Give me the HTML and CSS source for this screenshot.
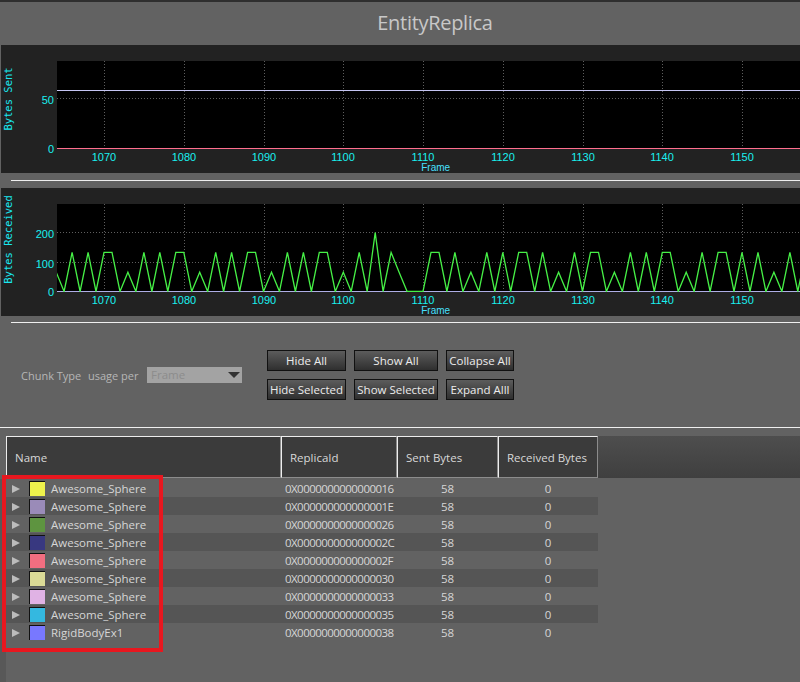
FILE: index.html
```html
<!DOCTYPE html>
<html>
<head>
<meta charset="utf-8">
<title>EntityReplica</title>
<link rel="stylesheet" href="styles.css">
</head>
<body>
<div class="app">
  <header class="titlebar"><h1 class="title">EntityReplica</h1></header>

  <section class="chart">
    <svg width="799" height="128" viewBox="0 0 799 128">
      <rect x="56" y="16" width="743" height="88" fill="#000"/>
      <g class="grid">
        <line x1="103.5" y1="16" x2="103.5" y2="104"/>
        <line x1="183.5" y1="16" x2="183.5" y2="104"/>
        <line x1="263.5" y1="16" x2="263.5" y2="104"/>
        <line x1="342.5" y1="16" x2="342.5" y2="104"/>
        <line x1="422.5" y1="16" x2="422.5" y2="104"/>
        <line x1="502.5" y1="16" x2="502.5" y2="104"/>
        <line x1="582.5" y1="16" x2="582.5" y2="104"/>
        <line x1="661.5" y1="16" x2="661.5" y2="104"/>
        <line x1="741.5" y1="16" x2="741.5" y2="104"/>
        <line x1="56" y1="53.5" x2="799" y2="53.5"/>
      </g>
      <line x1="56" y1="45.5" x2="799" y2="45.5" stroke="#c4c4f2" stroke-width="1"/>
      <line x1="56" y1="103.5" x2="799" y2="103.5" stroke="#ff6e8e" stroke-width="1"/>
      <g class="ytick">
        <text x="53" y="58.7">50</text>
        <text x="53" y="108.4">0</text>
      </g>
      <g class="xtick">
        <text x="103" y="116">1070</text>
        <text x="183" y="116">1080</text>
        <text x="263" y="116">1090</text>
        <text x="342" y="116">1100</text>
        <text x="422" y="116">1110</text>
        <text x="502" y="116">1120</text>
        <text x="582" y="116">1130</text>
        <text x="661" y="116">1140</text>
        <text x="741" y="116">1150</text>
      </g>
      <text class="axis-x" x="434.7" y="126">Frame</text>
      <text class="axis-y" transform="translate(11,54) rotate(-90)">Bytes Sent</text>
    </svg>
  </section>

  <div class="rule"></div>

  <section class="chart">
    <svg width="799" height="128" viewBox="0 0 799 128">
      <defs>
        <clipPath id="plot2"><rect x="56" y="16" width="743" height="88"/></clipPath>
      </defs>
      <rect x="56" y="16" width="743" height="88" fill="#000"/>
      <g class="grid">
        <line x1="103.5" y1="16" x2="103.5" y2="104"/>
        <line x1="183.5" y1="16" x2="183.5" y2="104"/>
        <line x1="263.5" y1="16" x2="263.5" y2="104"/>
        <line x1="342.5" y1="16" x2="342.5" y2="104"/>
        <line x1="422.5" y1="16" x2="422.5" y2="104"/>
        <line x1="502.5" y1="16" x2="502.5" y2="104"/>
        <line x1="582.5" y1="16" x2="582.5" y2="104"/>
        <line x1="661.5" y1="16" x2="661.5" y2="104"/>
        <line x1="741.5" y1="16" x2="741.5" y2="104"/>
        <line x1="56" y1="44.5" x2="799" y2="44.5"/>
        <line x1="56" y1="74.5" x2="799" y2="74.5"/>
      </g>
      <line x1="56" y1="103.5" x2="799" y2="103.5" stroke="#aeaee6" stroke-width="1"/>
      <polyline clip-path="url(#plot2)" fill="none" stroke="#46f046" stroke-width="1.3" stroke-linejoin="miter"
        points="55.2,84.2 63.1,103.5 71.1,64.4 79.1,103.5 87.1,64.4 95,103.5 103,64.4 111,64.4 119,103.5 126.9,84.2 134.9,103.5 142.9,64.4 150.9,103.5 158.8,64.4 166.8,103.5 174.8,64.4 182.8,64.4 190.7,103.5 198.7,84.2 206.7,103.5 214.7,64.4 222.6,103.5 230.6,64.4 238.6,103.5 246.6,64.4 254.5,64.4 262.5,103.5 270.5,84.2 278.5,103.5 286.4,64.4 294.4,103.5 302.4,64.4 310.4,103.5 318.3,64.4 326.3,64.4 334.3,103.5 342.3,84.2 350.2,103.5 358.2,64.4 366.2,103.5 374.2,44.7 382.1,103.5 390.1,64.4 398.1,84.2 406.1,103.5 414,103.5 422,103.5 430,64.4 438,64.4 445.9,103.5 453.9,64.4 461.9,103.5 469.9,84.2 477.8,103.5 485.8,64.4 493.8,103.5 501.8,64.4 509.7,103.5 517.7,64.4 525.7,64.4 533.7,103.5 541.6,64.4 549.6,103.5 557.6,84.2 565.6,103.5 573.5,64.4 581.5,103.5 589.5,64.4 597.5,64.4 605.4,103.5 613.4,84.2 621.4,103.5 629.4,64.4 637.3,103.5 645.3,64.4 653.3,103.5 661.3,64.4 669.2,64.4 677.2,103.5 685.2,84.2 693.2,103.5 701.1,64.4 709.1,103.5 717.1,64.4 725.1,64.4 733,103.5 741,64.4 749,103.5 757,64.4 764.9,103.5 772.9,84.2 780.9,103.5 788.9,64.4 796.8,103.5 804.8,64.4"/>
      <g class="ytick">
        <text x="53" y="50">200</text>
        <text x="53" y="79.7">100</text>
        <text x="53" y="108.4">0</text>
      </g>
      <g class="xtick">
        <text x="103" y="116">1070</text>
        <text x="183" y="116">1080</text>
        <text x="263" y="116">1090</text>
        <text x="342" y="116">1100</text>
        <text x="422" y="116">1110</text>
        <text x="502" y="116">1120</text>
        <text x="582" y="116">1130</text>
        <text x="661" y="116">1140</text>
        <text x="741" y="116">1150</text>
      </g>
      <text class="axis-x" x="434.7" y="126">Frame</text>
      <text class="axis-y" transform="translate(11,51.5) rotate(-90)">Bytes Received</text>
    </svg>
  </section>

  <div class="rule rule-2"></div>

  <section class="controls">
    <div class="chunk">
      <span class="lbl lbl-type">Chunk Type</span>
      <span class="lbl lbl-usage">usage per</span>
      <div class="select"><span class="select-text">Frame</span><i class="caret"></i></div>
    </div>
    <div class="buttons">
      <button class="btn">Hide All</button>
      <button class="btn">Show All</button>
      <button class="btn">Collapse All</button>
      <button class="btn">Hide Selected</button>
      <button class="btn">Show Selected</button>
      <button class="btn">Expand Alll</button>
    </div>
  </section>

  <div class="rule rule-full"></div>

  <section class="table">
    <div class="thead">
      <div class="th th-name">Name</div>
      <div class="th th-id">ReplicaId</div>
      <div class="th th-sent">Sent Bytes</div>
      <div class="th th-recv">Received Bytes</div>
      <div class="th-fill"></div>
    </div>
    <div class="tbody">
      <div class="row">
        <div class="td name"><i class="arrow"></i><i class="swatch sw-1"></i><span>Awesome_Sphere</span></div>
        <div class="td id">0X0000000000000016</div><div class="td num">58</div><div class="td num">0</div>
      </div>
      <div class="row alt">
        <div class="td name"><i class="arrow"></i><i class="swatch sw-2"></i><span>Awesome_Sphere</span></div>
        <div class="td id">0X000000000000001E</div><div class="td num">58</div><div class="td num">0</div>
      </div>
      <div class="row">
        <div class="td name"><i class="arrow"></i><i class="swatch sw-3"></i><span>Awesome_Sphere</span></div>
        <div class="td id">0X0000000000000026</div><div class="td num">58</div><div class="td num">0</div>
      </div>
      <div class="row alt">
        <div class="td name"><i class="arrow"></i><i class="swatch sw-4"></i><span>Awesome_Sphere</span></div>
        <div class="td id">0X000000000000002C</div><div class="td num">58</div><div class="td num">0</div>
      </div>
      <div class="row">
        <div class="td name"><i class="arrow"></i><i class="swatch sw-5"></i><span>Awesome_Sphere</span></div>
        <div class="td id">0X000000000000002F</div><div class="td num">58</div><div class="td num">0</div>
      </div>
      <div class="row alt">
        <div class="td name"><i class="arrow"></i><i class="swatch sw-6"></i><span>Awesome_Sphere</span></div>
        <div class="td id">0X0000000000000030</div><div class="td num">58</div><div class="td num">0</div>
      </div>
      <div class="row">
        <div class="td name"><i class="arrow"></i><i class="swatch sw-7"></i><span>Awesome_Sphere</span></div>
        <div class="td id">0X0000000000000033</div><div class="td num">58</div><div class="td num">0</div>
      </div>
      <div class="row alt">
        <div class="td name"><i class="arrow"></i><i class="swatch sw-8"></i><span>Awesome_Sphere</span></div>
        <div class="td id">0X0000000000000035</div><div class="td num">58</div><div class="td num">0</div>
      </div>
      <div class="row">
        <div class="td name"><i class="arrow"></i><i class="swatch sw-9"></i><span>RigidBodyEx1</span></div>
        <div class="td id">0X0000000000000038</div><div class="td num">58</div><div class="td num">0</div>
      </div>
    </div>
    <div class="highlight"></div>
  </section>
</div>
</body>
</html>
```

FILE: styles.css
```css
html, body {
  margin: 0;
  padding: 0;
  background: #626262;
}

.app {
  position: relative;
  width: 800px;
  height: 682px;
  overflow: hidden;
  background: #626262;
  font-family: "Open Sans", "Noto Sans", sans-serif;
}

/* title */
.titlebar {
  height: 45px;
  box-sizing: border-box;
  border-top: 2px solid #2e2e2e;
  display: flex;
  align-items: center;
  justify-content: center;
  padding: 0 0 2px 70px;
}

.title {
  margin: 0;
  font-size: 20px;
  font-weight: 400;
  letter-spacing: -0.3px;
  color: #c8c8c8;
}

/* charts */
.chart {
  height: 128px;
  margin-left: 1px;
  background: #222222;
}

.chart svg {
  display: block;
}

.grid line {
  stroke: #5e5e5e;
  stroke-width: 1;
  stroke-dasharray: 1 2;
}

.ytick text,
.xtick text {
  font-family: "Liberation Sans", Arial, sans-serif;
  font-size: 11px;
  fill: #19f0f0;
}

.ytick text {
  text-anchor: end;
}

.xtick text {
  text-anchor: middle;
}

.axis-x {
  font-family: "Liberation Sans", Arial, sans-serif;
  font-size: 10px;
  fill: #48e0ff;
  text-anchor: middle;
}

.axis-y {
  font-family: "DejaVu Sans Mono", monospace;
  font-size: 10.5px;
  fill: #19e8f0;
  text-anchor: middle;
}

/* separators */
.rule {
  height: 1px;
  background: #efefef;
  margin: 7px 0 7px 11px;
}

.rule-2 {
  margin: 6px 0 0 11px;
}

.rule-full {
  margin: 0;
}

/* controls */
.controls {
  height: 104px;
  box-sizing: border-box;
  padding: 27px 0 0 21px;
  display: flex;
  align-items: flex-start;
}

.chunk {
  height: 50px;
  padding-top: 2px;
  box-sizing: border-box;
  display: flex;
  align-items: center;
}

.lbl {
  font-size: 11px;
  color: #b6b6b6;
  line-height: 16px;
  white-space: nowrap;
}

.lbl-type {
  width: 67px;
}

.lbl-usage {
  width: 59px;
}

.select {
  width: 95px;
  height: 16px;
  margin-top: -2px;
  background: #a3a3a3;
  display: flex;
  align-items: center;
  justify-content: space-between;
  box-sizing: border-box;
  padding: 0 2px 0 4px;
}

.select-text {
  font-size: 11.5px;
  color: #8c8c8c;
  line-height: 16px;
}

.caret {
  width: 0;
  height: 0;
  border-left: 6px solid transparent;
  border-right: 6px solid transparent;
  border-top: 6px solid #333;
}

.buttons {
  margin-left: 25px;
  display: grid;
  grid-template-columns: 79px 84px 68px;
  grid-template-rows: 21px 21px;
  column-gap: 8px;
  row-gap: 8px;
}

.btn {
  margin: 0;
  padding: 0;
  border: 1px solid #111;
  border-radius: 0;
  background: linear-gradient(#5c5c5c, #2f2f2f);
  color: #ececec;
  font-family: "Open Sans", "Noto Sans", sans-serif;
  font-size: 11.5px;
  line-height: 19px;
  text-align: center;
}

/* table */
.table {
  padding-top: 8px;
  height: 254px;
  box-sizing: border-box;
}

.thead {
  display: flex;
  height: 42px;
  padding-left: 6px;
}

.th {
  box-sizing: border-box;
  height: 42px;
  background: #3b3b3b;
  border: 1px solid;
  border-color: #ededed #8c8c8c #8c8c8c #ededed;
  color: #d8d8d8;
  font-size: 11.5px;
  line-height: 42px;
  padding-left: 8px;
}

.th-name { width: 275px; }
.th-id { width: 116px; }
.th-sent { width: 101px; }
.th-recv { width: 100px; }

.th-fill {
  flex: 1;
  background: linear-gradient(#4e4e4e, #3f3f3f);
}

.tbody {
  margin-top: 1px;
  border-left: 6px solid #585858;
  height: 240px;
}

.row {
  display: grid;
  grid-template-columns: 275px 116px 101px 100px;
  height: 18px;
  width: 592px;
}

.row.alt {
  background: #555555;
}

.td {
  font-size: 11.5px;
  line-height: 19px;
  color: #d6d6d6;
  white-space: nowrap;
}

.name {
  display: flex;
  align-items: center;
}

.arrow {
  width: 0;
  height: 0;
  margin-left: 6px;
  border-left: 8px solid #bcbcbc;
  border-top: 4.5px solid transparent;
  border-bottom: 4.5px solid transparent;
}

.swatch {
  width: 16px;
  height: 15px;
  box-sizing: border-box;
  margin-left: 9px;
  margin-right: 6px;
  border-left: 1px solid #111;
  border-top: 1px solid #111;
}

.sw-1 { background: #eef24c; }
.sw-2 { background: #9a8bb8; }
.sw-3 { background: #5e9440; }
.sw-4 { background: #383880; }
.sw-5 { background: #f26e80; }
.sw-6 { background: #dada96; }
.sw-7 { background: #e0b2e4; }
.sw-8 { background: #34b8e0; }
.sw-9 { background: #7878ff; }

.id {
  padding-left: 4px;
  letter-spacing: -0.55px;
}

.num {
  text-align: center;
}

.highlight {
  position: absolute;
  left: 2px;
  top: 475px;
  width: 161px;
  height: 177px;
  box-sizing: border-box;
  border: 4px solid #e8171f;
}
```
